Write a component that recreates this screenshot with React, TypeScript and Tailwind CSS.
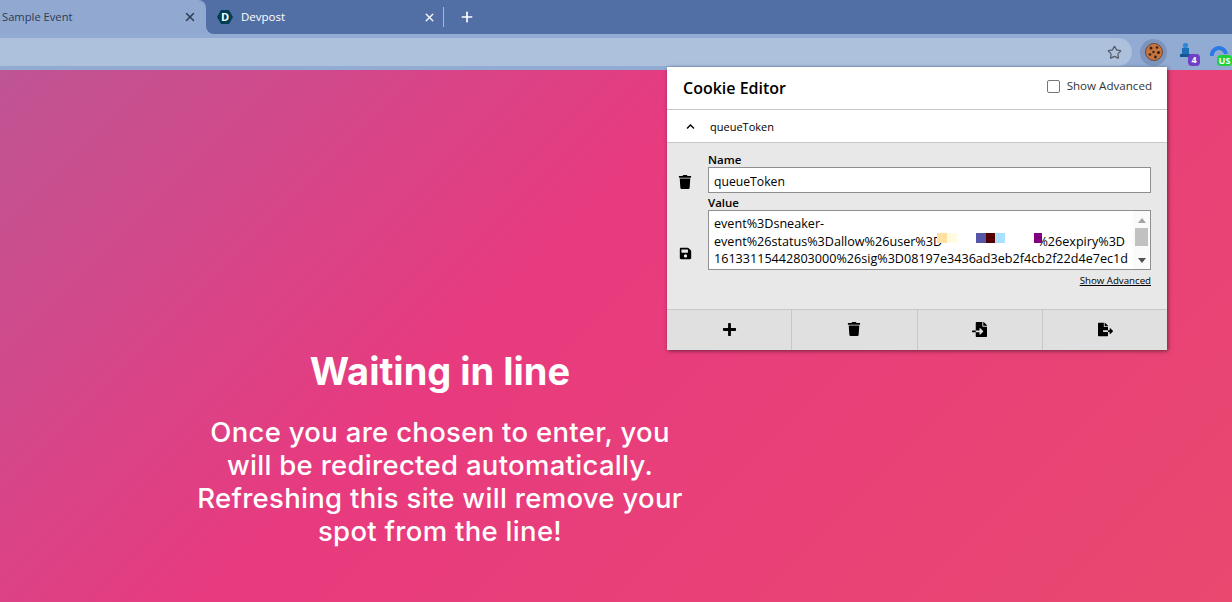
import { Star, X, Plus } from "lucide-react";
import {
  FaChevronUp,
  FaFileExport,
  FaFileImport,
  FaPlus,
  FaSave,
  FaTrash,
} from "react-icons/fa";

const uiFont = "font-['Open_Sans',sans-serif]";

const Tabs = () => {
  return (
    <div className={`flex h-[34px] bg-[#526fa5] text-[11.5px] ${uiFont}`}>
      <div className="w-[206px] bg-[#526fa5]">
        <div className="flex h-full items-center justify-between rounded-tr-lg bg-[#91a9d1] pl-[2px] pr-[9px] text-[#2f3a52]">
          <span className="text-[11.2px]">Sample Event</span>
          <X size={14} strokeWidth={2.5} className="text-[#2f3b55]" />
        </div>
      </div>
      <div className="flex-1 bg-[#91a9d1]">
        <div className="flex h-full items-center rounded-bl-lg bg-[#526fa5] pl-[11px] text-white">
          <svg width="16" height="16" viewBox="0 0 16 16" className="mr-2">
            <polygon points="4,1 12,1 16,8 12,15 4,15 0,8" fill="#003e54" />
            <text x="8" y="12" textAnchor="middle" fontSize="11" fontWeight="700" fill="#fff" fontFamily="Open Sans">
              D
            </text>
          </svg>
          <span>Devpost</span>
          <X size={13} strokeWidth={2.5} className="ml-[138px] text-[#f2f5fa]" />
          <div className="ml-[7px] h-5 w-px bg-[#a9b8d3]" />
          <Plus size={16} strokeWidth={2.5} className="ml-[15px]" />
        </div>
      </div>
    </div>
  );
};

const CookieIcon = () => (
  <svg width="18" height="18" viewBox="0 0 18 18">
    <circle cx="9" cy="9" r="8.5" fill="#c8743f" stroke="#5a3a26" strokeWidth="0.8" />
    <circle cx="6" cy="5" r="1.5" fill="#33231a" />
    <circle cx="12" cy="4.5" r="1.3" fill="#33231a" />
    <circle cx="13.5" cy="9.5" r="1.6" fill="#33231a" />
    <circle cx="8.5" cy="9" r="1.2" fill="#33231a" />
    <circle cx="5" cy="11.5" r="1.3" fill="#33231a" />
    <circle cx="10.5" cy="14" r="1.4" fill="#33231a" />
  </svg>
);

const Toolbar = () => {
  return (
    <div className="flex h-9 items-center bg-[#92abd3] py-1">
      <div className="flex h-7 w-[1132px] items-center justify-end rounded-r-full bg-[#adc0dc] pr-[10px]">
        <Star size={15} strokeWidth={2} className="text-[#555d6b]" />
      </div>
      <div className="ml-2 flex h-[27px] w-[27px] items-center justify-center rounded-full bg-[#7d95bd]">
        <CookieIcon />
      </div>
      <div className="relative ml-[11px] h-5 w-5">
        <svg width="12" height="16" viewBox="0 0 12 16" className="absolute left-[2px] top-[1px]">
          <rect x="3" y="0" width="5" height="5" rx="2" fill="#2b8ad6" />
          <rect x="2" y="5" width="7" height="7" fill="#1f6fb8" />
          <rect x="0" y="11" width="11" height="3" fill="#14568f" />
        </svg>
        <span className="absolute left-[10px] top-[12px] flex h-3 w-3 items-center justify-center rounded-sm bg-[#6f3fc4] text-[9px] font-bold text-white">
          4
        </span>
      </div>
      <div className="relative ml-[12px] h-5 w-5">
        <svg width="18" height="18" viewBox="0 0 18 18" className="absolute left-0 top-[2px]">
          <path d="M2 12 A7 7 0 0 1 16 10" fill="none" stroke="#2c7be5" strokeWidth="4" />
        </svg>
        <span className="absolute left-[7px] top-[13px] flex h-[11px] w-[15px] items-center justify-center rounded-sm bg-[#1fd13a] text-[9px] font-bold text-white">
          US
        </span>
      </div>
    </div>
  );
};

const CookiePopup = () => {
  return (
    <div className={`absolute left-[667px] top-[67px] w-[500px] bg-[#e8e8e8] text-black shadow-[1px_1px_4px_rgba(0,0,0,0.5)] ${uiFont}`}>
      <div className="flex h-[43px] justify-between border-b border-[#c8c8c8] bg-white pl-4 pr-[15px]">
        <span className="self-center text-[16px] font-semibold">Cookie Editor</span>
        <label className="mt-[11px] flex h-4 items-center gap-[7px] text-[11.6px] text-[#333]">
          <span className="h-[13px] w-[13px] rounded-[2px] border border-[#767676] bg-white" />
          Show Advanced
        </label>
      </div>
      <div className="flex h-[33px] items-center border-b border-[#c8c8c8] bg-white pl-[19px] text-[11px]">
        <FaChevronUp size={9} />
        <span className="ml-[15px] mt-[3px]">queueToken</span>
      </div>
      <div className="flex h-[166px]">
        <div className="flex w-[41px] flex-col items-center pr-[5px] pt-[32px]">
          <FaTrash size={14} />
          <FaSave size={13} className="mt-[58px]" />
        </div>
        <div className="w-[443px] pt-[9px]">
          <div className="text-[11.5px] font-semibold leading-[15px]">Name</div>
          <div className="flex h-[26px] items-center border border-[#8f8f8f] bg-white px-[5px] pt-1 text-[12.2px]">
            queueToken
          </div>
          <div className="mt-[2px] text-[11.5px] font-semibold leading-[15px]">Value</div>
          <div className="relative flex h-[60px] border border-[#8f8f8f] bg-white text-[12.6px] leading-[17.5px]">
            <div className="flex-1 whitespace-nowrap px-[5px] pt-[4px]">
              <div>event%3Dsneaker-</div>
              <div className="flex justify-between">
                <span>event%26status%3Dallow%26user%3D</span>
                <span className="mr-[3px]">%26expiry%3D</span>
              </div>
              <div>16133115442803000%26sig%3D08197e3436ad3eb2f4cb2f22d4e7ec1d</div>
            </div>
            <div className="flex w-[17px] flex-col items-center bg-[#fafafa] pt-[7px]">
              <span className="h-0 w-0 border-x-[4px] border-b-[5px] border-x-transparent border-b-[#a3a3a3]" />
              <span className="mt-[5px] h-[18px] w-[13px] bg-[#c1c1c1]" />
              <span className="mt-[12px] h-0 w-0 border-x-[4px] border-t-[5px] border-x-transparent border-t-[#505050]" />
            </div>
            <span className="absolute left-[228px] top-[22px] h-[10px] w-[10px] bg-[#ffe0a0]" />
            <span className="absolute left-[238px] top-[22px] h-[10px] w-[10px] bg-[#fffbe0]" />
            <span className="absolute left-[267px] top-[22px] h-[10px] w-[10px] bg-[#5555aa]" />
            <span className="absolute left-[277px] top-[22px] h-[10px] w-[9px] bg-[#550000]" />
            <span className="absolute left-[286px] top-[22px] h-[10px] w-[10px] bg-[#aae0ff]" />
            <span className="absolute left-[325px] top-[22px] h-[10px] w-[8px] bg-[#800080]" />
          </div>
          <div className="mt-[5px] text-right text-[9.7px] leading-[12px] underline">Show Advanced</div>
        </div>
      </div>
      <div className="grid h-[41px] grid-cols-[125px_126px_125px_124px] border-t border-[#c8c8c8] bg-[#e0e0e0]">
        <div className="flex items-center justify-center border-r border-[#c8c8c8] pb-[2px]">
          <FaPlus size={15} />
        </div>
        <div className="flex items-center justify-center border-r border-[#c8c8c8] pb-[2px] pr-[2px]">
          <FaTrash size={14} />
        </div>
        <div className="flex items-center justify-center border-r border-[#c8c8c8] pb-[2px] pr-[2px]">
          <FaFileImport size={15} />
        </div>
        <div className="flex items-center justify-center pb-[2px]">
          <FaFileExport size={15} />
        </div>
      </div>
    </div>
  );
};

const App = () => {
  return (
    <div className="relative h-[602px] w-[1232px] overflow-hidden">
      <Tabs />
      <Toolbar />
      <div className="h-[532px] bg-[linear-gradient(135deg,#bf5594_0%,#e83a7f_42%,#e9486f_100%)] font-['Inter',sans-serif] text-white">
        <div className="w-[880px] pt-[278px] text-center">
          <h1 className="text-[38px] font-bold leading-[46px]">Waiting in line</h1>
          <p className="mx-auto mt-[22px] w-[500px] text-[27.5px] font-medium leading-[33px] tracking-[0.3px]">
            Once you are chosen to enter, you will be redirected automatically. Refreshing this site will remove your spot from the line!
          </p>
        </div>
      </div>
      <CookiePopup />
    </div>
  );
};

export default App;
